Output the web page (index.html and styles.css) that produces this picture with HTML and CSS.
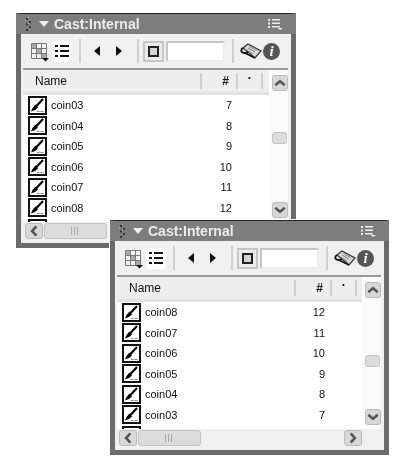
FILE: index.html
```html
<!DOCTYPE html>
<html lang="en">
<head>
  <meta charset="UTF-8" />
  <title>Cast:Internal</title>
  <link rel="stylesheet" href="styles.css">
</head>
<body>
  <!-- shared icons -->
  <svg class="icon-defs" width="0" height="0">
    <symbol id="i-brush" viewBox="0 0 15 15">
      <path d="M13 1 L6 8.500" stroke="#000" stroke-width="2.200" fill="none"/>
      <path d="M5.500 6.500 L8 9.500 L5 12 L1 13.500 L2.500 10 Z" fill="#000"/>
      <path d="M7 13.500h2.500M10.500 13.500h3" stroke="#888" stroke-width="1"/>
    </symbol>
    <symbol id="i-up" viewBox="0 0 15 15">
      <path d="M2.500 10 L7.500 5.500 L12.500 10" stroke="#555" stroke-width="2.800" fill="none"/>
    </symbol>
    <symbol id="i-down" viewBox="0 0 15 15">
      <path d="M2.500 5 L7.500 9.500 L12.500 5" stroke="#555" stroke-width="2.800" fill="none"/>
    </symbol>
    <symbol id="i-left" viewBox="0 0 15 15">
      <path d="M10 2.500 L5.500 7.500 L10 12.500" stroke="#555" stroke-width="2.800" fill="none"/>
    </symbol>
    <symbol id="i-right" viewBox="0 0 15 15">
      <path d="M5 2.500 L9.500 7.500 L5 12.500" stroke="#555" stroke-width="2.800" fill="none"/>
    </symbol>
    <symbol id="i-grip" viewBox="0 0 6 15">
      <path d="M1 1h2v2h-2zM4 4h2v2h-2zM1 6.500h2v2h-2zM4 9h2v2h-2zM1 12h2v2h-2z" fill="#333"/>
      <path d="M3 0h1v1h-1zM0 3h1v1h-1zM3 6h1v1h-1z" fill="#bbb"/>
    </symbol>
    <symbol id="i-options" viewBox="0 0 15 11">
      <path d="M0 0h2v2h-2zM0 3.500h2v2h-2zM0 7h2v2h-2zM4 0h8v1.500h-8zM4 3.500h8v1.500h-8zM4 7h8v1.500h-8z" fill="#eee"/>
      <path d="M9.500 9h5.500l-2.700 2z" fill="#eee"/>
    </symbol>
    <symbol id="i-grid" viewBox="0 0 19 19">
      <path d="M0.500 0.500h15v15h-15zM5.500 0.500v15M10.500 0.500v15M0.500 5.500h15M0.500 10.500h15" fill="#f4f4f4" stroke="#777" stroke-width="1"/>
      <path d="M6 6h4v4h-4zM1 1h4v4h-4zM11 11h4v4h-4z" fill="#aaa"/>
      <path d="M11 15h7l-3.500 3.500z" fill="#111"/>
    </symbol>
    <symbol id="i-list" viewBox="0 0 14 12">
      <path d="M0 0h3v2h-3zM0 5h3v2h-3zM0 10h3v2h-3zM5 0h9v2h-9zM5 5h9v2h-9zM5 10h9v2h-9z" fill="#111"/>
    </symbol>
    <symbol id="i-script" viewBox="0 0 22 18">
      <path d="M3 6 L8 2 L21 9 L15 16 Z" fill="#d8d8d8" stroke="#333" stroke-width="1.200"/>
      <path d="M8 6l7 4M6.500 8l7 4M9.500 4.500l7 4" stroke="#888" stroke-width="1"/>
      <path d="M3 6 C0 8 1 11 5 11 L8 10 M5 11 L15 16" fill="none" stroke="#111" stroke-width="1.800"/>
    </symbol>
  </svg>

  <div class="cast-window cast-back">
    <div class="title-bar">
      <svg class="grip"><use href="#i-grip"/></svg>
      <span class="tri-down"></span>
      <span class="title-text">Cast:Internal</span>
      <svg class="options"><use href="#i-options"/></svg>
    </div>
    <div class="toolbar">
      <svg class="grid-icon"><use href="#i-grid"/></svg>
      <div class="list-btn"><svg class="list-icon"><use href="#i-list"/></svg></div>
      <span class="sep sep-a"></span>
      <span class="arrow-left"></span>
      <span class="arrow-right"></span>
      <span class="sep sep-b"></span>
      <div class="square-btn"><span class="square"></span></div>
      <div class="name-input"></div>
      <span class="sep sep-c"></span>
      <svg class="script-icon"><use href="#i-script"/></svg>
      <div class="info">i</div>
    </div>
    <div class="body">
      <div class="list-area">
        <div class="list">
          <div class="list-head">
            <div class="col-name">Name</div>
            <div class="col-num">#</div>
            <div class="col-dot">•</div>
          </div>
          <div class="row"><svg class="brush"><use href="#i-brush"/></svg><span class="row-name">coin03</span><span class="row-num">7</span></div>
          <div class="row"><svg class="brush"><use href="#i-brush"/></svg><span class="row-name">coin04</span><span class="row-num">8</span></div>
          <div class="row"><svg class="brush"><use href="#i-brush"/></svg><span class="row-name">coin05</span><span class="row-num">9</span></div>
          <div class="row"><svg class="brush"><use href="#i-brush"/></svg><span class="row-name">coin06</span><span class="row-num">10</span></div>
          <div class="row"><svg class="brush"><use href="#i-brush"/></svg><span class="row-name">coin07</span><span class="row-num">11</span></div>
          <div class="row"><svg class="brush"><use href="#i-brush"/></svg><span class="row-name">coin08</span><span class="row-num">12</span></div>
          <div class="row"><svg class="brush"></svg></div>
        </div>
        <div class="vscroll">
          <div class="sb-btn"><svg><use href="#i-up"/></svg></div>
          <div class="sb-thumb"></div>
          <div class="sb-btn sb-end"><svg><use href="#i-down"/></svg></div>
        </div>
      </div>
      <div class="hscroll">
        <div class="sb-btn"><svg><use href="#i-left"/></svg></div>
        <div class="h-thumb"><span class="h-grip"></span></div>
        <div class="sb-btn sb-end-h"><svg><use href="#i-right"/></svg></div>
      </div>
    </div>
  </div>

  <div class="cast-window cast-front">
    <div class="title-bar">
      <svg class="grip"><use href="#i-grip"/></svg>
      <span class="tri-down"></span>
      <span class="title-text">Cast:Internal</span>
      <svg class="options"><use href="#i-options"/></svg>
    </div>
    <div class="toolbar">
      <svg class="grid-icon"><use href="#i-grid"/></svg>
      <div class="list-btn"><svg class="list-icon"><use href="#i-list"/></svg></div>
      <span class="sep sep-a"></span>
      <span class="arrow-left"></span>
      <span class="arrow-right"></span>
      <span class="sep sep-b"></span>
      <div class="square-btn"><span class="square"></span></div>
      <div class="name-input"></div>
      <span class="sep sep-c"></span>
      <svg class="script-icon"><use href="#i-script"/></svg>
      <div class="info">i</div>
    </div>
    <div class="body">
      <div class="list-area">
        <div class="list">
          <div class="list-head">
            <div class="col-name">Name</div>
            <div class="col-num">#</div>
            <div class="col-dot">•</div>
          </div>
          <div class="row"><svg class="brush"><use href="#i-brush"/></svg><span class="row-name">coin08</span><span class="row-num">12</span></div>
          <div class="row"><svg class="brush"><use href="#i-brush"/></svg><span class="row-name">coin07</span><span class="row-num">11</span></div>
          <div class="row"><svg class="brush"><use href="#i-brush"/></svg><span class="row-name">coin06</span><span class="row-num">10</span></div>
          <div class="row"><svg class="brush"><use href="#i-brush"/></svg><span class="row-name">coin05</span><span class="row-num">9</span></div>
          <div class="row"><svg class="brush"><use href="#i-brush"/></svg><span class="row-name">coin04</span><span class="row-num">8</span></div>
          <div class="row"><svg class="brush"><use href="#i-brush"/></svg><span class="row-name">coin03</span><span class="row-num">7</span></div>
          <div class="row"><svg class="brush"></svg></div>
        </div>
        <div class="vscroll">
          <div class="sb-btn"><svg><use href="#i-up"/></svg></div>
          <div class="sb-thumb"></div>
          <div class="sb-btn sb-end"><svg><use href="#i-down"/></svg></div>
        </div>
      </div>
      <div class="hscroll">
        <div class="sb-btn"><svg><use href="#i-left"/></svg></div>
        <div class="h-thumb"><span class="h-grip"></span></div>
        <div class="sb-btn sb-end-h"><svg><use href="#i-right"/></svg></div>
      </div>
    </div>
  </div>
</body>
</html>
```
FILE: styles.css
```css
* {
  margin: 0;
  padding: 0;
  box-sizing: border-box;
}

body {
  background: #fff;
  font-family: "Liberation Sans", Arial, sans-serif;
  color: #111;
  width: 408px;
  height: 465px;
  overflow: hidden;
}

.icon-defs {
  position: absolute;
}

/* windows sit on a free canvas and overlap */
.cast-window {
  position: absolute;
  width: 280px;
  height: 235px;
  display: flex;
  flex-direction: column;
  background: #f0f0f0;
  border: 5px solid #6b6b6b;
  border-top: 1px solid #222;
  filter: blur(0.5px);
}

.cast-back {
  left: 16px;
  top: 13px;
}

.cast-front {
  left: 110px;
  top: 220px;
  width: 279px;
  outline: 1px solid #fff;
}

.title-bar {
  height: 20px;
  margin: 0 -5px;
  padding: 0 13px 0 9px;
  display: flex;
  align-items: center;
  background: #7d7d7d;
  color: #ececec;
}

.grip {
  width: 6px;
  height: 15px;
}

.tri-down {
  width: 0;
  height: 0;
  margin-left: 8px;
  border-left: 5px solid transparent;
  border-right: 5px solid transparent;
  border-top: 6px solid #eee;
}

.title-text {
  margin-left: 5px;
  flex: 1;
  font-size: 14px;
  font-weight: bold;
}

.options {
  width: 15px;
  height: 11px;
}

.toolbar {
  height: 34px;
  display: flex;
  align-items: center;
  padding-left: 10px;
}

.grid-icon {
  width: 19px;
  height: 19px;
  margin-top: 2px;
}

.list-btn {
  width: 20px;
  height: 21px;
  margin-left: 2px;
  display: flex;
  align-items: center;
  justify-content: center;
  background: #fff;
  border-radius: 4px;
}

.list-icon {
  width: 14px;
  height: 12px;
}

.sep {
  width: 2px;
  height: 24px;
  background: #cfcfcf;
}

.sep-a {
  margin-left: 7px;
}

.arrow-left {
  margin-left: 13px;
  border-top: 5px solid transparent;
  border-bottom: 5px solid transparent;
  border-right: 6px solid #111;
}

.arrow-right {
  margin-left: 16px;
  border-top: 5px solid transparent;
  border-bottom: 5px solid transparent;
  border-left: 6px solid #111;
}

.sep-b {
  margin-left: 15px;
}

.square-btn {
  width: 21px;
  height: 21px;
  margin-left: 4px;
  display: flex;
  align-items: center;
  justify-content: center;
  border: 2px solid #c6c6c6;
  background: #ececec;
}

.square {
  width: 11px;
  height: 11px;
  border: 2px solid #222;
  background: #d4d4d4;
}

.name-input {
  width: 59px;
  height: 21px;
  margin-left: 2px;
  background: #fff;
  border: 2px solid #c6c6c6;
  border-right-color: #eee;
  border-bottom-color: #eee;
}

.sep-c {
  margin-left: 7px;
}

.script-icon {
  width: 22px;
  height: 18px;
  margin-left: 6px;
}

.info {
  width: 17px;
  height: 17px;
  margin-left: 1px;
  border-radius: 50%;
  background: #555;
  color: #fff;
  font-family: "Liberation Serif", serif;
  font-size: 15px;
  font-style: italic;
  font-weight: bold;
  line-height: 17px;
  text-align: center;
}

.body {
  flex: 1;
  min-height: 0;
  display: flex;
  flex-direction: column;
  margin: 0 3px 0 2px;
  border-top: 2px solid #999;
}

.list-area {
  height: 152px;
  display: flex;
  background: #fff;
}

.list {
  flex: 1;
  min-width: 0;
  overflow: hidden;
}

.list-head {
  height: 25px;
  display: grid;
  grid-template-columns: 179px 36px 25px 1fr;
  align-items: center;
  background: #eeeeee;
  border-bottom: 3px solid #e2e2e2;
  font-size: 12px;
}

.col-name {
  padding-left: 12px;
  border-right: 2px solid #d0d0d0;
  line-height: 16px;
}

.col-num {
  padding-right: 7px;
  text-align: right;
  font-weight: bold;
  border-right: 2px solid #d0d0d0;
  line-height: 16px;
}

.col-dot {
  text-align: center;
  font-size: 8px;
  line-height: 10px;
  padding-bottom: 6px;
  border-right: 2px solid #d0d0d0;
}

.row {
  height: 20.5px;
  display: flex;
  align-items: center;
  padding-left: 5px;
  font-size: 11px;
}

.brush {
  width: 19px;
  height: 19px;
  background: #fff;
  border: 2px solid #111;
  flex-shrink: 0;
}

.row-name {
  margin-left: 4px;
  flex: 1;
}

.row-num {
  margin-right: 37px;
}

.vscroll {
  width: 19px;
  display: flex;
  flex-direction: column;
  padding: 5px 1px 4px 3px;
  background: #fbfbfb;
}

.sb-btn {
  width: 16px;
  height: 16px;
  flex-shrink: 0;
  background: #d8d8d8;
  border: 1px solid #bbb;
  border-radius: 3px;
  display: flex;
  align-items: center;
  justify-content: center;
}

.sb-btn svg {
  width: 14px;
  height: 14px;
}

.sb-thumb {
  height: 12px;
  margin-top: 41px;
  background: #dcdcdc;
  border: 1px solid #c4c4c4;
  border-radius: 3px;
}

.cast-front .sb-thumb {
  margin-top: 57px;
}

.sb-end {
  margin-top: auto;
}

.hscroll {
  height: 17px;
  margin-top: 1px;
  margin-right: 19px;
  display: flex;
  padding-left: 2px;
}

.hscroll .sb-btn {
  width: 18px;
  height: 16px;
}

.h-thumb {
  width: 63px;
  height: 16px;
  margin-left: 1px;
  display: flex;
  align-items: center;
  justify-content: center;
  background: #dcdcdc;
  border: 1px solid #c4c4c4;
  border-radius: 3px;
}

.h-grip {
  width: 9px;
  height: 8px;
  background: repeating-linear-gradient(to right, #aaa 0 1px, transparent 1px 3px);
}

.sb-end-h {
  margin-left: auto;
}
```
